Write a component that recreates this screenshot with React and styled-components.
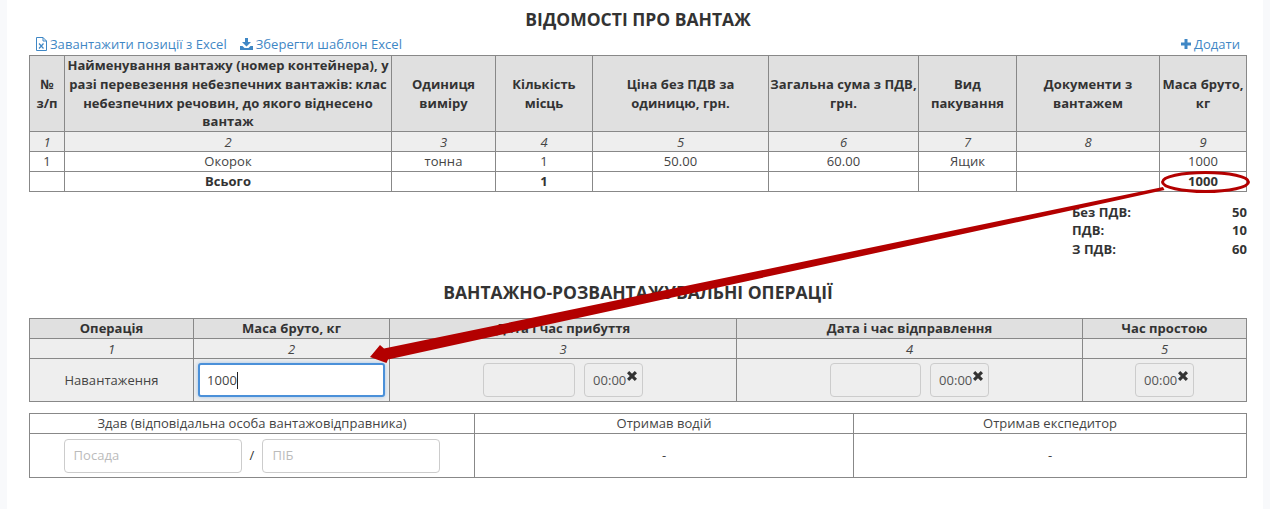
import React from "react";
import styled, { createGlobalStyle } from "styled-components";

const Global = createGlobalStyle`
  html, body { margin: 0; padding: 0; height: 509px; overflow: hidden; background: #f8f9fb; }
  body { font-family: "Open Sans", "Noto Sans", sans-serif; font-size: 13px; line-height: 18.57px; color: #333; letter-spacing: .04px; }
`;
const Page = styled.div`position: relative; width: 1270px; height: 509px; overflow: hidden;`;
const Sheet = styled.main`margin: 0 7px; width: 1256px; height: 509px; background: #fff; box-sizing: border-box; padding: 8px 16px 0 22px;`;
const Title = styled.h3`margin: ${p => p.$mt || 0}px 0 0; font-size: 17.5px; line-height: 22px; font-weight: 700; text-align: center; color: #333; letter-spacing: 0;`;
const Links = styled.div`display: flex; justify-content: space-between; height: 22px; padding: 0 7px; box-sizing: border-box; align-items: center; margin-top: 3px;`;
const LinkGroup = styled.div`display: flex; gap: 13px;`;
const Link = styled.a`display: inline-flex; align-items: center; gap: 3px; color: #3f87c5; font-size: 13px; white-space: nowrap;`;
const Table = styled.table`border-collapse: collapse; table-layout: fixed; width: 1217px; margin-top: ${p => p.$mt || 0}px;`;
const Row = styled.tr`background: ${p => p.$bg || "transparent"}; height: ${p => p.$h}px;`;
const Th = styled.th`border: 1px solid #888; padding: 0 1px; font-weight: 700; text-align: center; font-size: 13px; line-height: 18.57px;`;
const Td = styled.td`border: 1px solid #888; padding: 0 1px; text-align: center; font-weight: ${p => p.$bold ? 700 : 400}; font-size: 13px; line-height: 18.57px; color: ${p => p.$bold ? "#333" : "#444"};`;
const NumCell = styled(Td)`font-style: italic; padding-top: ${p => p.$pt || 0}px; line-height: ${p => 18 - (p.$pt || 0)}px;`;
const Summary = styled.div`margin: 11px 0 0 1043px; width: 175px; display: grid; grid-template-columns: 1fr auto; font-weight: 700; line-height: 18.57px;`;
const FieldRow = styled.div`display: flex; justify-content: center; align-items: center; gap: ${p => p.$gap || 9}px;`;
const Box = styled.div`box-sizing: border-box; width: ${p => p.$w}px; height: 34px; border: 1px solid #ccc; border-radius: 4px; display: flex; align-items: center; text-align: left; padding-left: ${p => p.$pl || 8}px; background: ${p => p.$white ? "#fff" : "#eee"}; color: ${p => p.$ph ? "#bbb" : "#555"};`;
const Focused = styled(Box)`width: 187px; background: #fff; border: 2px solid #4a90d9; border-radius: 3px; padding-left: 7px; color: #444; box-shadow: 0 0 4px rgba(74, 144, 217, .45);
  &::after { content: ""; width: 1px; height: 17px; background: #222; }`;
const TimeBox = styled(Box)`width: 59px; white-space: nowrap; overflow: visible;`;
const Remove = styled.svg`width: 12px; height: 12px; margin: -9px 0 0 0; flex: none; fill: #333;`;
const Slash = styled.span`color: #333;`;
const Overlay = styled.svg`position: absolute; left: 0; top: 0; width: 1270px; height: 509px; pointer-events: none;`;

const widths1 = [35, 327, 104, 97, 176, 150, 98, 143, 87];
const widths2 = [164, 196, 347, 346, 164];
const widths3 = [445, 379, 393];
const Cols = ({ w }) => <colgroup>{w.map((x, i) => <col key={i} width={x} />)}</colgroup>;

const Time = () => (
  <TimeBox>00:00
    <Remove viewBox="0 0 12 12"><path d="M1 3.2 3.2 1 6 3.8 8.8 1 11 3.2 8.2 6 11 8.8 8.8 11 6 8.2 3.2 11 1 8.8 3.8 6z" /></Remove>
  </TimeBox>
);

export default function App() {
  return (
    <Page>
      <Global />
      <Sheet>
        <Title>ВІДОМОСТІ ПРО ВАНТАЖ</Title>
        <Links>
          <LinkGroup>
            <Link>
              <svg width="11" height="14" viewBox="0 0 11 14" fill="none" stroke="#3f87c5" strokeWidth="1"><path d="M.5.5h6.5l3.5 3.5v9.5H.5zM7 .5V4h3.5" /><path d="M3 6.5 7.5 11.5M7.5 6.5 3 11.5" strokeWidth="1.2" /></svg>
              Завантажити позиції з Excel
            </Link>
            <Link>
              <svg width="13" height="12" viewBox="0 0 13 12" fill="#3f87c5"><path d="M5 0h3v4h3L6.5 8.5 2 4h3zM0 8h2.5l2 2h4l2-2H13v4H0z" /></svg>
              Зберегти шаблон Excel
            </Link>
          </LinkGroup>
          <Link>
            <svg width="10" height="10" viewBox="0 0 10 10" fill="#3f87c5"><path d="M3.5 0h3v3.5H10v3H6.5V10h-3V6.5H0v-3h3.5z" /></svg>
            Додати
          </Link>
        </Links>
        <Table>
          <Cols w={widths1} />
          <tbody>
            <Row $bg="#e0e0e0" $h={76}>
              <Th>№<br />з/п</Th>
              <Th>Найменування вантажу (номер контейнера), у разі перевезення небезпечних вантажів: клас небезпечних речовин, до якого віднесено вантаж</Th>
              <Th>Одиниця виміру</Th>
              <Th>Кількість місць</Th>
              <Th>Ціна без ПДВ за одиницю, грн.</Th>
              <Th>Загальна сума з ПДВ, грн.</Th>
              <Th>Вид пакування</Th>
              <Th>Документи з вантажем</Th>
              <Th>Маса бруто, кг</Th>
            </Row>
            <Row $bg="#eeeeee" $h={20}>
              {[1, 2, 3, 4, 5, 6, 7, 8, 9].map(n => <NumCell key={n} $pt={1}>{n}</NumCell>)}
            </Row>
            <Row $h={20}>
              <Td>1</Td><Td>Окорок</Td><Td>тонна</Td><Td>1</Td><Td>50.00</Td><Td>60.00</Td><Td>Ящик</Td><Td></Td><Td>1000</Td>
            </Row>
            <Row $h={19}>
              <Td></Td><Td $bold>Всього</Td><Td></Td><Td $bold>1</Td><Td></Td><Td></Td><Td></Td><Td></Td><Td $bold>1000</Td>
            </Row>
          </tbody>
        </Table>
        <Summary>
          <span>Без ПДВ:</span><span>50</span>
          <span>ПДВ:</span><span>10</span>
          <span>З ПДВ:</span><span>60</span>
        </Summary>
        <Title $mt={23}>ВАНТАЖНО-РОЗВАНТАЖУВАЛЬНІ ОПЕРАЦІЇ</Title>
        <Table $mt={15}>
          <Cols w={widths2} />
          <tbody>
            <Row $bg="#e0e0e0" $h={20}>
              <Th>Операція</Th><Th>Маса бруто, кг</Th><Th>Дата і час прибуття</Th><Th>Дата і час відправлення</Th><Th>Час простою</Th>
            </Row>
            <Row $bg="#eeeeee" $h={20}>
              {[1, 2, 3, 4, 5].map(n => <NumCell key={n}>{n}</NumCell>)}
            </Row>
            <Row $bg="#eeeeee" $h={43}>
              <Td>Навантаження</Td>
              <Td><FieldRow><Focused>1000</Focused></FieldRow></Td>
              <Td><FieldRow><Box $w={92} /><Time /></FieldRow></Td>
              <Td><FieldRow><Box $w={91} /><Time /></FieldRow></Td>
              <Td><FieldRow><Time /></FieldRow></Td>
            </Row>
          </tbody>
        </Table>
        <Table $mt={11}>
          <Cols w={widths3} />
          <tbody>
            <Row $h={20}><Td>Здав (відповідальна особа вантажовідправника)</Td><Td>Отримав водій</Td><Td>Отримав експедитор</Td></Row>
            <Row $h={44}>
              <Td>
                <FieldRow $gap={8}>
                  <Box $w={178} $white $ph $pl={9}>Посада</Box>
                  <Slash>/</Slash>
                  <Box $w={178} $white $ph $pl={9}>ПІБ</Box>
                </FieldRow>
              </Td>
              <Td>-</Td>
              <Td>-</Td>
            </Row>
          </tbody>
        </Table>
      </Sheet>
      <Overlay viewBox="0 0 1270 509">
        <ellipse cx="1205.5" cy="182" rx="43" ry="9.5" fill="none" stroke="#b30000" strokeWidth="3" />
        <path d="M1163 187 1164.5 190 388 359.5 386.5 363 370 357 380 345 384 348.5Z" fill="#b30000" />
      </Overlay>
    </Page>
  );
}
